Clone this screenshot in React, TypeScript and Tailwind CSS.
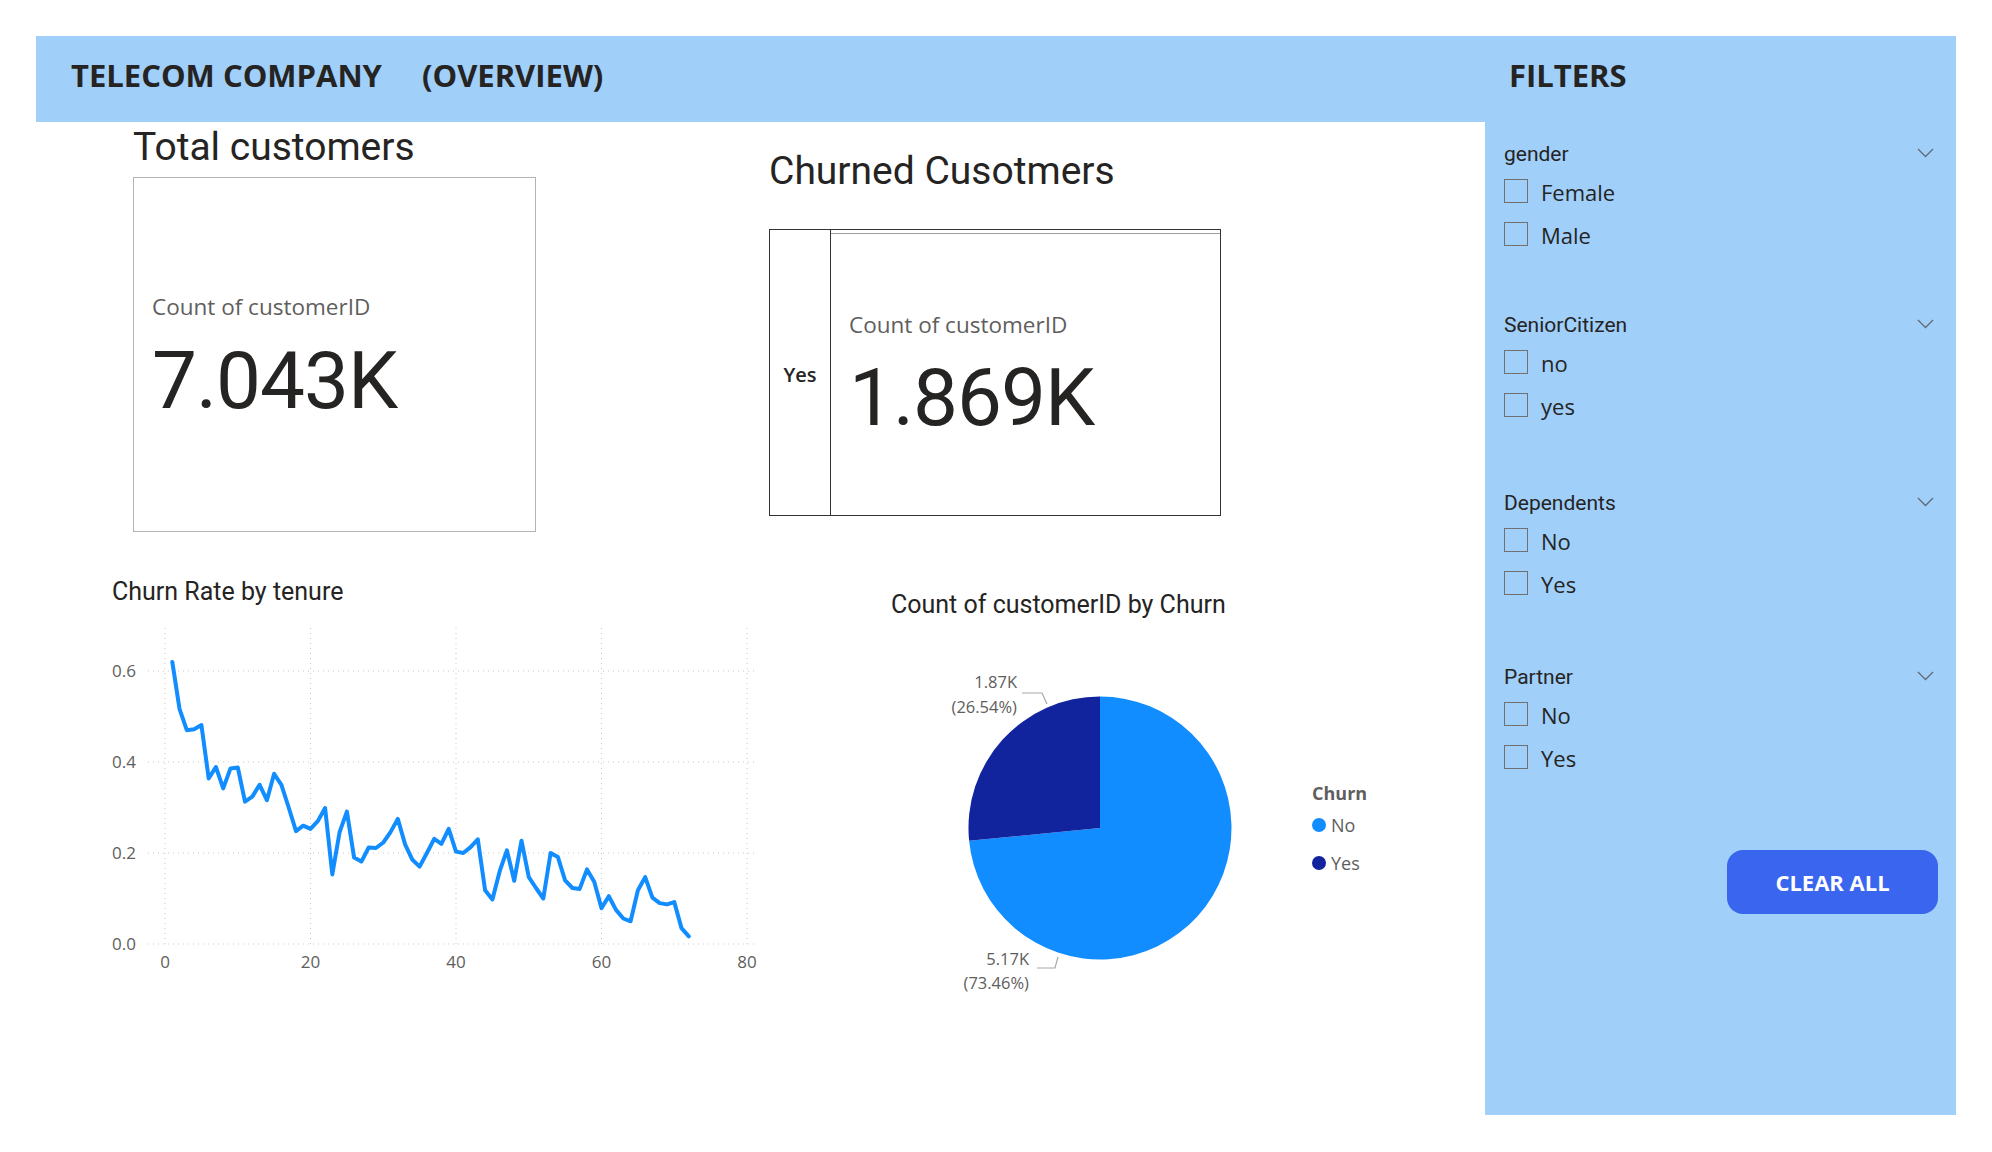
import React from "react";

// churn rate per tenure month (1..72)
const churnRate = [
  0.62, 0.517, 0.47, 0.472, 0.481, 0.364, 0.389, 0.342, 0.386, 0.388, 0.313,
  0.324, 0.35, 0.316, 0.374, 0.35, 0.3, 0.248, 0.26, 0.253, 0.27, 0.299,
  0.153, 0.246, 0.291, 0.19, 0.181, 0.212, 0.211, 0.223, 0.246, 0.275, 0.219,
  0.185, 0.17, 0.2, 0.231, 0.22, 0.253, 0.203, 0.2, 0.213, 0.23, 0.118, 0.098,
  0.16, 0.206, 0.139, 0.227, 0.147, 0.123, 0.1, 0.2, 0.191, 0.14, 0.123,
  0.121, 0.164, 0.137, 0.079, 0.105, 0.075, 0.056, 0.05, 0.118, 0.147, 0.102,
  0.09, 0.087, 0.092, 0.035, 0.017,
];

const filterGroups = [
  { title: "gender", items: ["Female", "Male"], mt: "mt-0" },
  { title: "SeniorCitizen", items: ["no", "yes"], mt: "mt-[57px]" },
  { title: "Dependents", items: ["No", "Yes"], mt: "mt-[64px]" },
  { title: "Partner", items: ["No", "Yes"], mt: "mt-[60px]" },
];

const xPos = (t: number) => 69 + t * 7.275;
const yPos = (v: number) => 324 - v * 455;

const LineChart = () => {
  const points = churnRate
    .map((v, i) => `${xPos(i + 1).toFixed(1)},${yPos(v).toFixed(1)}`)
    .join(" ");
  return (
    <svg width="680" height="360" className="mt-[13px]">
      {[0, 0.2, 0.4, 0.6].map((v) => (
        <g key={v}>
          <line
            x1="52"
            x2="662"
            y1={yPos(v)}
            y2={yPos(v)}
            stroke="#c8c8c8"
            strokeWidth="1"
            strokeDasharray="1 4"
          />
          <text
            x="40"
            y={yPos(v) + 6}
            textAnchor="end"
            fontFamily="Open Sans, sans-serif"
            fontSize="17"
            fill="#605E5C"
          >
            {v.toFixed(1)}
          </text>
        </g>
      ))}
      {[0, 20, 40, 60, 80].map((t) => (
        <g key={t}>
          <line
            x1={xPos(t)}
            x2={xPos(t)}
            y1="8"
            y2="324"
            stroke="#c8c8c8"
            strokeWidth="1"
            strokeDasharray="1 4"
          />
          <text
            x={xPos(t)}
            y="348"
            textAnchor="middle"
            fontFamily="Open Sans, sans-serif"
            fontSize="17"
            fill="#605E5C"
          >
            {t}
          </text>
        </g>
      ))}
      <polyline
        points={points}
        fill="none"
        stroke="#118DFF"
        strokeWidth="4"
        strokeLinejoin="round"
        strokeLinecap="round"
      />
    </svg>
  );
};

const PieChart = () => (
  <svg width="400" height="380">
    <path
      d="M209 208 L209 76.5 A131.5 131.5 0 1 1 78.1 220.7 Z"
      fill="#118DFF"
    />
    <path
      d="M209 208 L78.1 220.7 A131.5 131.5 0 0 1 209 76.5 Z"
      fill="#12239E"
    />
    <polyline
      points="131,73 151,73 156,84"
      fill="none"
      stroke="#a8a8a8"
      strokeWidth="1.2"
    />
    <polyline
      points="146,348 164,348 167,337"
      fill="none"
      stroke="#a8a8a8"
      strokeWidth="1.2"
    />
    <g fontFamily="Open Sans, sans-serif" fontSize="16.5" fill="#605E5C" textAnchor="end">
      <text x="126" y="68">1.87K</text>
      <text x="126" y="93">(26.54%)</text>
      <text x="138" y="345">5.17K</text>
      <text x="138" y="369">(73.46%)</text>
    </g>
  </svg>
);

const Chevron = () => (
  <svg width="17" height="10" viewBox="0 0 17 10" className="mb-[5px]">
    <path d="M1 1 L8.5 8.5 L16 1" fill="none" stroke="#5f6b77" strokeWidth="1.3" />
  </svg>
);

export default function App() {
  return (
    <div className="w-[1992px] h-[1152px] bg-white pt-[36px] pl-[36px] overflow-hidden">
      <div className="w-[1920px] flex flex-col">
        {/* header */}
        <div className="flex h-[86px] bg-[#A0CFFA] font-['Open_Sans',sans-serif] font-bold text-[31px] text-[#252423]">
          <div className="w-[1449px] flex items-center pl-[35px] pb-[8px]">
            <span>TELECOM COMPANY</span>
            <span className="ml-[40px]">(OVERVIEW)</span>
          </div>
          <div className="flex items-center pl-[24px] pb-[8px]">FILTERS</div>
        </div>

        <div className="flex">
          {/* main */}
          <div className="w-[1449px] flex flex-col">
            <div className="flex">
              <div className="ml-[97px] mt-[3px] flex flex-col">
                <div className="font-['Roboto',sans-serif] text-[39px] leading-[44px] text-[#252423]">
                  Total customers
                </div>
                <div className="mt-[8px] w-[403px] h-[355px] border-[1.5px] border-[#b3b3b3] flex flex-col pl-[18px] pt-[114px]">
                  <div className="font-['Open_Sans',sans-serif] text-[22.5px] leading-[30px] text-[#605E5C]">
                    Count of customerID
                  </div>
                  <div className="mt-[14px] font-['Roboto',sans-serif] text-[80px] leading-[90px] tracking-[-1px] text-[#252423]">
                    7.043K
                  </div>
                </div>
              </div>

              <div className="ml-[233px] mt-[27px] flex flex-col">
                <div className="font-['Roboto',sans-serif] text-[39px] leading-[44px] text-[#252423]">
                  Churned Cusotmers
                </div>
                <div className="mt-[36px] w-[452px] h-[287px] border-[1.5px] border-[#333] flex">
                  <div className="w-[61px] border-r-[1.5px] border-[#333] flex items-center justify-center pt-[4px] font-['Open_Sans',sans-serif] font-semibold text-[20px] text-[#252423]">
                    Yes
                  </div>
                  <div className="flex-1 flex flex-col">
                    <div className="mt-[2.5px] border-t border-[#a0a0a0]" />
                    <div className="pl-[18px] pt-[76px] font-['Open_Sans',sans-serif] text-[22.5px] leading-[30px] text-[#605E5C]">
                      Count of customerID
                    </div>
                    <div className="pl-[18px] mt-[13px] font-['Roboto',sans-serif] text-[80px] leading-[90px] tracking-[-1px] text-[#252423]">
                      1.869K
                    </div>
                  </div>
                </div>
              </div>
            </div>

            <div className="flex mt-[45px]">
              <div className="ml-[60px] w-[680px] flex flex-col">
                <div className="pl-[16px] font-['Roboto',sans-serif] text-[25px] leading-[30px] text-[#252423]">
                  Churn Rate by tenure
                </div>
                <LineChart />
              </div>

              <div className="ml-[115px] mt-[13px] flex flex-col">
                <div className="font-['Roboto',sans-serif] text-[25px] leading-[30px] text-[#252423]">
                  Count of customerID by Churn
                </div>
                <div className="flex">
                  <PieChart />
                  <div className="ml-[21px] mt-[160px] flex flex-col font-['Open_Sans',sans-serif] text-[18px] text-[#605E5C]">
                    <div className="font-bold leading-[26px]">Churn</div>
                    <div className="flex items-center gap-[5px] mt-[4px] leading-[30px]">
                      <span className="w-[14px] h-[14px] rounded-full bg-[#118DFF]" />
                      No
                    </div>
                    <div className="flex items-center gap-[5px] mt-[8px] leading-[30px]">
                      <span className="w-[14px] h-[14px] rounded-full bg-[#12239E]" />
                      Yes
                    </div>
                  </div>
                </div>
              </div>
            </div>
          </div>

          {/* filters */}
          <div className="w-[471px] h-[993px] bg-[#A0CFFA] flex flex-col pl-[19px] pr-[18px] pt-[19px]">
            {filterGroups.map((g) => (
              <div key={g.title} className={`${g.mt} flex flex-col`}>
                <div className="flex items-center justify-between pr-[4px] h-[28px]">
                  <span className="font-['Roboto',sans-serif] text-[21px] text-[#252423]">
                    {g.title}
                  </span>
                  <Chevron />
                </div>
                {g.items.map((item) => (
                  <div key={item} className="flex items-center h-[43px]">
                    <span className="w-[24px] h-[24px] border-[1.5px] border-[#707070]" />
                    <span className="ml-[13px] mt-[3px] font-['Open_Sans',sans-serif] text-[22px] text-[#252423]">
                      {item}
                    </span>
                  </div>
                ))}
              </div>
            ))}
            <div className="flex justify-end mt-[72px]">
              <button className="w-[211px] h-[64px] rounded-[16px] bg-[#3A65EE] text-white font-['Open_Sans',sans-serif] font-bold text-[22px]">
                CLEAR ALL
              </button>
            </div>
          </div>
        </div>
      </div>
    </div>
  );
}
